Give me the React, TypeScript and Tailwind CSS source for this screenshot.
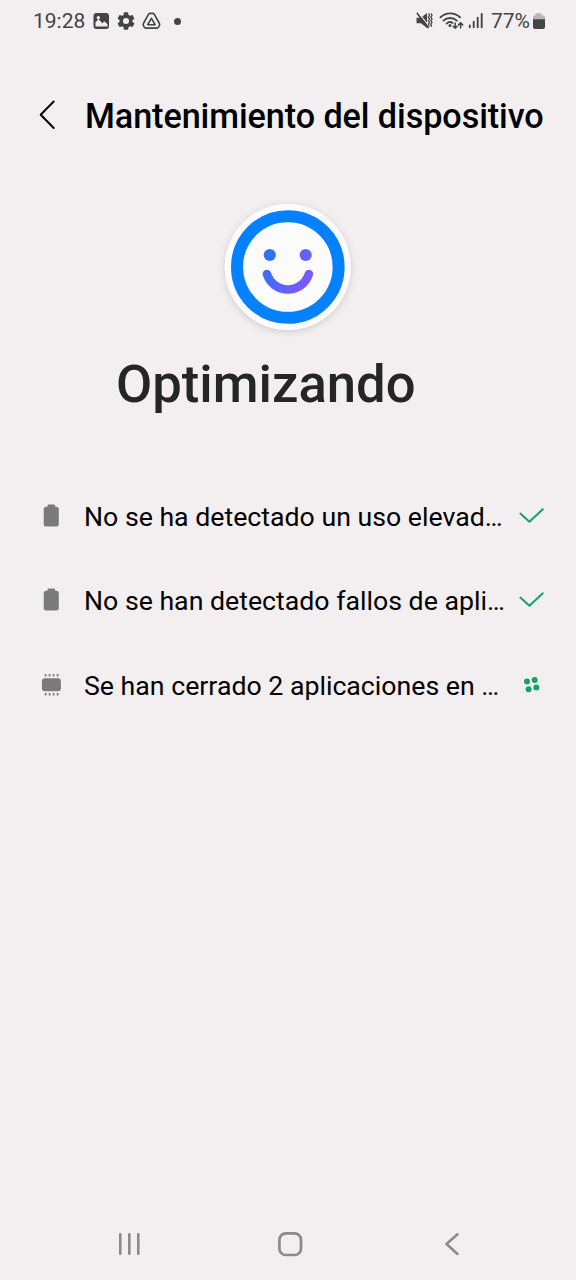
import type { ReactNode } from "react";

function StatusBar() {
  return (
    <div className="flex h-[42px] items-center justify-between pl-8 pr-[30px] text-[#444]">
      <div className="flex items-center">
        <span className="w-[61px] pl-px text-[21px] leading-[42px]">19:28</span>
        {/* Gallery */}
        <svg className="h-[42px] w-[17px]" viewBox="93 0 17 42">
          <path
            fillRule="evenodd"
            fill="currentColor"
            d="M96.5 13h9.5a3 3 0 0 1 3 3v10a3 3 0 0 1-3 3h-9.5a3 3 0 0 1-3-3V16a3 3 0 0 1 3-3ZM95.5 26.5h12v-2.2l-3.2-3-2 2-3.8-4-3 3ZM98.3 16a1.7 1.7 0 1 0 0 3.4 1.7 1.7 0 0 0 0-3.4Z"
          />
        </svg>
        {/* Settings */}
        <svg className="ml-[7px] h-[18px] w-[18px]" viewBox="2 2 20 20" fill="currentColor">
          <path d="M19.14 12.94c.04-.3.06-.61.06-.94s-.02-.64-.07-.94l2.03-1.58a.49.49 0 0 0 .12-.61l-1.92-3.32a.49.49 0 0 0-.59-.22l-2.39.96a7 7 0 0 0-1.62-.94l-.36-2.54a.48.48 0 0 0-.48-.41h-3.84a.48.48 0 0 0-.47.41l-.36 2.54c-.59.24-1.13.57-1.62.94l-2.39-.96a.49.49 0 0 0-.59.22L2.74 8.87a.48.48 0 0 0 .12.61l2.03 1.58a7 7 0 0 0 0 1.88l-2.03 1.58a.49.49 0 0 0-.12.61l1.92 3.32c.12.22.37.29.59.22l2.39-.96c.5.38 1.03.7 1.62.94l.36 2.54c.05.24.24.41.48.41h3.84c.24 0 .44-.17.47-.41l.36-2.54a7 7 0 0 0 1.62-.94l2.39.96c.22.08.47 0 .59-.22l1.92-3.32a.48.48 0 0 0-.12-.61zM12 15.4a3.4 3.4 0 1 1 0-6.8 3.4 3.4 0 0 1 0 6.8z" />
        </svg>
        {/* Drive */}
        <svg
          className="ml-[6px] h-[42px] w-[20px]"
          viewBox="141 0 20 42"
          fill="none"
          stroke="currentColor"
          strokeWidth="1.6"
          strokeLinejoin="round"
        >
          <path d="m148.6 14.2-5.2 9.3q-.6 1 0 2l.9 1.7q.5.9 1.5.9h11.2q1 0 1.5-.9l.9-1.7q.6-1 0-2l-5.2-9.3q-.5-.8-1.5-.8h-2.6q-1 0-1.5.8Z" />
          <path d="m151.4 18.3 3.7 6.4h-7.4Z" />
        </svg>
        <span className="ml-[13px] h-[7px] w-[7px] rounded-full bg-[#444]" />
      </div>

      <div className="flex items-center">
        <svg
          className="h-[42px] w-[76px]"
          viewBox="415 0 76 42"
          fill="none"
          stroke="currentColor"
          strokeWidth="1.7"
          strokeLinecap="round"
        >
          {/* Vibrate / muted */}
          <path d="M416.5 17.8h4.5l6-4.8v15l-6-4.8h-4.5Z" fill="currentColor" stroke="none" />
          <path d="m418.5 12.5 10 13" stroke="#f3eff0" strokeWidth="1.2" />
          <path d="m417.3 13.5 10.7 14" strokeWidth="1.7" />
          <path
            d="m428.8 13.8.7 1.7-1.2 1.7 1.2 1.8-1.2 1.8 1.2 1.7-1.2 1.8.7 2M431.3 13.8l.7 1.7-1.2 1.7 1.2 1.8-1.2 1.8 1.2 1.7-1.2 1.8.7 2"
            strokeWidth="1.3"
          />
          {/* Wifi */}
          <path
            d="M440.5 17.3a14 14 0 0 1 19.5 0M443.5 20.6a9.7 9.7 0 0 1 13.3 0M446.6 23.6a5.2 5.2 0 0 1 6-.8"
            strokeWidth="1.9"
          />
          <circle cx="450" cy="25.6" r="1.5" fill="currentColor" stroke="none" />
          <path d="M455.2 23v5m-2-1.8 2 2 2-2M460.6 28v-5m-2 1.9 2-2 2 2" strokeWidth="1.5" />
          {/* Signal */}
          <path d="M469.8 25.5v1.7M473.7 21.7v5.5M477.7 17.8v9.4M481.7 14v13.2" strokeWidth="1.9" />
        </svg>
        <span className="w-[41px] whitespace-nowrap text-[21px] leading-[42px]">77%</span>
        <svg className="h-[42px] w-[14px]" viewBox="532 0 14 42">
          <path d="M535.5 13.3h6v2h1.5q2 0 2 2V21h-12v-3.7q0-2 2-2h.5Z" fill="#b9b6b7" />
          <path d="M533 19.3h12v7.7q0 2-2 2h-8q-2 0-2-2Z" fill="currentColor" />
        </svg>
      </div>
    </div>
  );
}

function Smiley() {
  return (
    <svg className="mx-auto h-[156px] w-[156px]" viewBox="0 0 156 156">
      <defs>
        <linearGradient id="face" gradientUnits="userSpaceOnUse" x1="50" y1="62" x2="106" y2="96">
          <stop offset="0" stopColor="#2475f5" />
          <stop offset="1" stopColor="#8855ff" />
        </linearGradient>
        <filter id="shadow" x="-20%" y="-20%" width="140%" height="140%">
          <feDropShadow dx="0" dy="1.5" stdDeviation="3.5" floodColor="#000" floodOpacity="0.16" />
        </filter>
      </defs>
      <circle cx="77.8" cy="77" r="63" fill="#fcfcfd" filter="url(#shadow)" />
      <circle cx="77.8" cy="77" r="50.8" fill="none" stroke="#0381fe" strokeWidth="12" />
      <circle cx="59.8" cy="65" r="6.1" fill="url(#face)" />
      <circle cx="95.7" cy="65" r="6.1" fill="url(#face)" />
      <path
        d="M56.9 84a22 22 0 0 0 42 0"
        fill="none"
        stroke="url(#face)"
        strokeWidth="8.6"
        strokeLinecap="round"
      />
    </svg>
  );
}

function BatteryIcon() {
  return (
    <svg className="h-6 w-5" viewBox="0 0 20 24" fill="#7b7a7b">
      <path d="M7.5.5h5.600a1 1 0 0 1 1 1v1.200h1.200a2.500 2.500 0 0 1 2.500 2.500v14.800a2.500 2.500 0 0 1-2.500 2.500H5.200a2.500 2.500 0 0 1-2.500-2.500V5.200a2.500 2.500 0 0 1 2.500-2.500H6.500V1.500a1 1 0 0 1 1-1Z" />
    </svg>
  );
}

function MemoryIcon() {
  return (
    <svg className="h-6 w-5" viewBox="0 0 20 24" fill="#7b7a7b">
      <rect x=".9" y="5.2" width="19" height="13" rx="3" />
      <path
        d="M4.600 1v2.500M8.600 1v2.500M12.600 1v2.500M16.600 1v2.500M4.600 19.900v2.500M8.600 19.900v2.500M12.600 19.900v2.500M16.600 19.900v2.500"
        stroke="#7b7a7b"
        strokeWidth="1.7"
      />
    </svg>
  );
}

function CheckIcon() {
  return (
    <svg className="h-6 w-7" viewBox="0 0 28 24" fill="none">
      <path
        d="m2.400 9.600 9 8.200L24.800 5.300"
        stroke="#17a163"
        strokeWidth="2"
        strokeLinecap="round"
        strokeLinejoin="round"
      />
    </svg>
  );
}

function LoadingIcon() {
  return (
    <svg className="h-6 w-7" viewBox="0 0 28 24" fill="#17a163">
      <circle cx="9" cy="8.600" r="3" />
      <circle cx="16.700" cy="6.900" r="3" />
      <circle cx="10.600" cy="16.200" r="3" />
      <circle cx="18.300" cy="14.500" r="3" />
    </svg>
  );
}

const tasks: { icon: ReactNode; text: string; status: ReactNode }[] = [
  { icon: <BatteryIcon />, text: "No se ha detectado un uso elevad…", status: <CheckIcon /> },
  { icon: <BatteryIcon />, text: "No se han detectado fallos de apli…", status: <CheckIcon /> },
  { icon: <MemoryIcon />, text: "Se han cerrado 2 aplicaciones en …", status: <LoadingIcon /> },
];

export default function App() {
  return (
    <div className="flex h-[1280px] w-[576px] flex-col overflow-hidden bg-[#f3eff0] font-['Roboto',sans-serif]">
      <StatusBar />

      <header className="flex h-[148px] items-center pl-[38px]">
        <svg className="h-[34px] w-[47px]" viewBox="0 0 47 34" fill="none">
          <path
            d="M15.7 2.5 2.7 15.7l13 13.3"
            stroke="#000"
            strokeWidth="2"
            strokeLinecap="round"
            strokeLinejoin="round"
          />
        </svg>
        <h1 className="whitespace-nowrap pt-px text-[34.2px] font-medium tracking-[-0.08px] text-black">
          Mantenimiento del dispositivo
        </h1>
      </header>

      <main className="flex-1">
        <Smiley />
        <h2 className="pl-[116px] text-[52.6px] font-medium leading-[76px] text-[#252525]">
          Optimizando
        </h2>

        <ul className="mt-[52px]">
          {tasks.map((task) => (
            <li key={task.text} className="flex h-[84.3px] items-center pl-[41px]">
              {task.icon}
              <span className="ml-[23px] w-[434px] whitespace-nowrap pt-[2px] text-[26.7px] text-black">
                {task.text}
              </span>
              {task.status}
            </li>
          ))}
        </ul>
      </main>

      {/* Navigation bar */}
      <nav className="flex h-[72px] items-center pl-[117px]">
        <svg className="h-6 w-6" viewBox="0 0 24 24" stroke="#8b898a" strokeWidth="2.6" strokeLinecap="round">
          <path d="M3.3 2.2v19.6M12.3 2.2v19.6M21.3 2.2v19.6" />
        </svg>
        <svg
          className="ml-[136px] h-[26px] w-[26px]"
          viewBox="0 0 26 26"
          fill="none"
          stroke="#8b898a"
          strokeWidth="2.7"
        >
          <rect x="2.4" y="2.4" width="21.6" height="21.6" rx="6.5" />
        </svg>
        <svg
          className="ml-[142px] h-6 w-4"
          viewBox="0 0 16 24"
          fill="none"
          stroke="#8b898a"
          strokeWidth="2.5"
          strokeLinecap="round"
          strokeLinejoin="round"
        >
          <path d="M12.5 2.3 1.5 12l11 10" />
        </svg>
      </nav>
    </div>
  );
}
